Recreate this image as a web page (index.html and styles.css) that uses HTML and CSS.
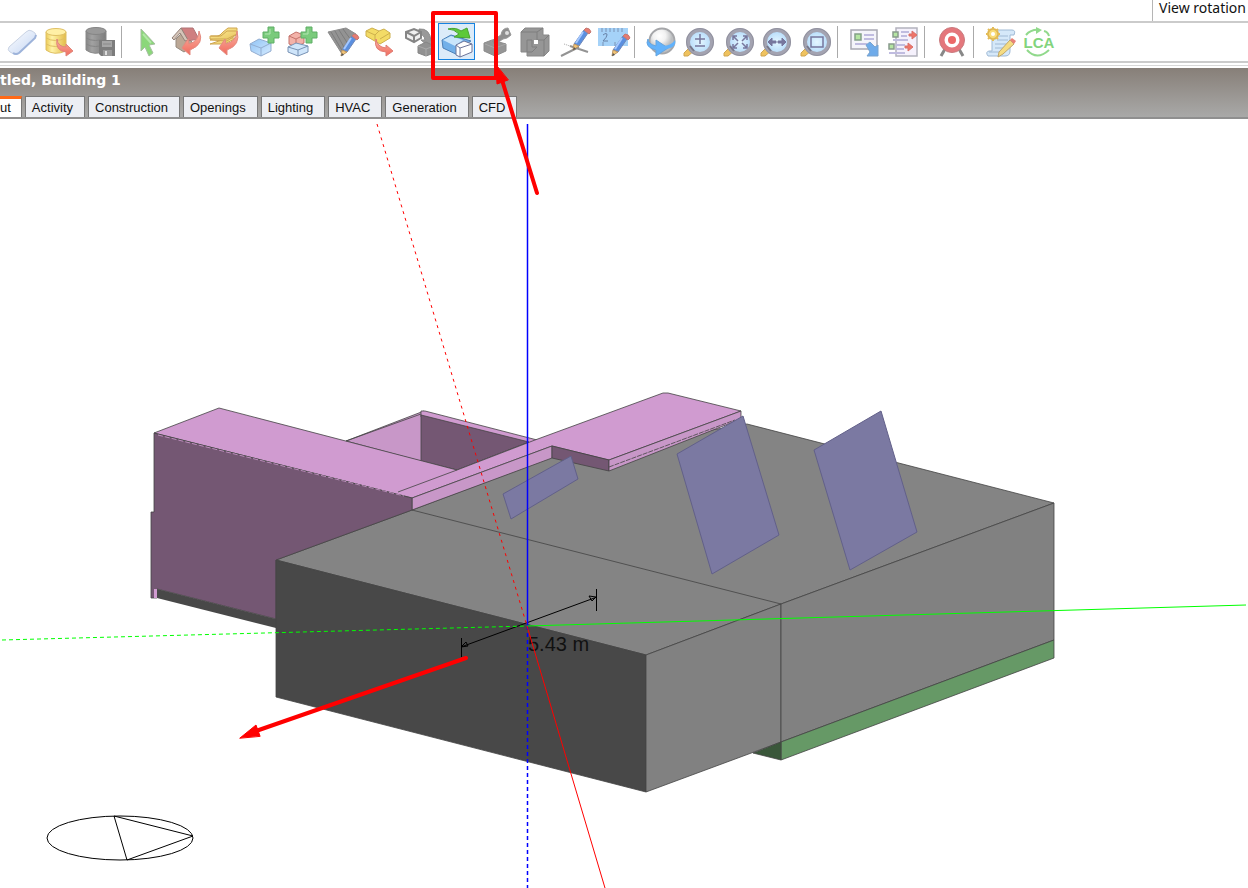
FILE: index.html
```html
<!DOCTYPE html>
<html lang="en">
<head>
<meta charset="utf-8">
<title>Untitled, Building 1</title>
<link rel="stylesheet" href="styles.css">
</head>
<body>
<svg class="defs" aria-hidden="true">
  <defs>
    <linearGradient id="gold" x1="0" y1="0" x2="1" y2="1"><stop offset="0" stop-color="#fff0a0"/><stop offset="1" stop-color="#e8c45c"/></linearGradient>
    <linearGradient id="goldcyl" x1="0" y1="0" x2="1" y2="0"><stop offset="0" stop-color="#eccb55"/><stop offset=".3" stop-color="#fff3a8"/><stop offset="1" stop-color="#e3bb48"/></linearGradient>
    <linearGradient id="redg" x1="0" y1="0" x2="0" y2="1"><stop offset="0" stop-color="#fbb5a5"/><stop offset="1" stop-color="#f0695c"/></linearGradient>
    <linearGradient id="grayg" x1="0" y1="0" x2="1" y2="0"><stop offset="0" stop-color="#858585"/><stop offset=".3" stop-color="#a2a2a2"/><stop offset="1" stop-color="#7c7c7c"/></linearGradient>
    <linearGradient id="eraserg" x1="0" y1="0" x2="1" y2="1"><stop offset="0" stop-color="#ffffff"/><stop offset="1" stop-color="#c3d5f3"/></linearGradient>
    <linearGradient id="blueg" x1="0" y1="0" x2="1" y2="1"><stop offset="0" stop-color="#8fc3f5"/><stop offset="1" stop-color="#d6ebff"/></linearGradient>
    <radialGradient id="lens"><stop offset="0" stop-color="#e4f6ff"/><stop offset="1" stop-color="#b3dafa"/></radialGradient>
    <radialGradient id="ball" cx=".4" cy=".3"><stop offset="0" stop-color="#ffffff"/><stop offset=".5" stop-color="#f2f2f2"/><stop offset="1" stop-color="#bcbec0"/></radialGradient>
    <g id="plus"><path d="M5 0h6v5h5v6h-5v5H5v-5H0V5h5z" fill="#7acb7c" stroke="#5fae66"/><path d="M7 2v5H2" fill="none" stroke="#b2e6b2"/></g>
    <g id="pencil"><path d="M12 1l4 3-9 13-5-2z" fill="#5a8fe0" stroke="#6f88b8"/><path d="M11 3l-7 11" stroke="#a5c8ff" stroke-width="2"/><path d="M12 1l2-2q4 0 5 4l-2 2z" fill="#e77b71" stroke="#c47a74"/><path d="M2 15l5 2-6 4z" fill="#f5c675" stroke="#b89566"/><path d="M1 21l1-3 2 2z" fill="#555"/></g>
    <g id="magnifier"><path d="M6 20l-6 6v3h4l7-6z" fill="#efc25e" stroke="#cfa550"/><circle cx="16" cy="15" r="12" fill="url(#lens)" stroke="#a3a3b1" stroke-width="4"/><circle cx="16" cy="15" r="13.5" fill="none" stroke="#92929f"/><path d="M6 19l4 5" stroke="#77778a" stroke-width="2"/></g>
  </defs>
</svg>

<header class="top-strip">
  <span class="view-label">View rotation</span>
</header>

<nav class="toolbar" aria-label="Model tools">
  <div class="pair">
    <button class="tool" aria-label="Clear"><svg class="icon" viewBox="0 0 30 30"><path d="M1 20L18 5q3-3 6-1l3 2q2 2 0 5L11 26q-3 2-5 1l-4-2q-3-2-1-5z" fill="url(#eraserg)" stroke="#c9d3e4"/><path d="M11 26L27 11l1-3M11 26q-3 2-6 0" fill="none" stroke="#9db3da" stroke-width="2"/></svg></button>
    <button class="tool" aria-label="Load from library"><svg class="icon" viewBox="0 0 30 30"><path d="M1 5v18q8 6 20 1V5z" fill="url(#goldcyl)" stroke="#dfc064"/><ellipse cx="11" cy="5" rx="10" ry="3.5" fill="#fff0a6" stroke="#dfc064"/><path d="M1 11q9 5 20 0M1 17q9 5 20 0" fill="none" stroke="#dfc064"/><path d="M12 12q1 8 9 8v-3l7 7-7 5v-4Q10 24 12 12z" fill="url(#redg)" stroke="#e0867c"/></svg></button>
  </div>
  <button class="tool" aria-label="Save to library"><svg class="icon" viewBox="0 0 30 30"><path d="M1 4v19q8 6 20 1V4z" fill="url(#grayg)" stroke="#8a8a8a"/><ellipse cx="11" cy="4" rx="10" ry="3.5" fill="#999" stroke="#858585"/><path d="M1 11q9 5 20 0M1 17q9 5 20 0" fill="none" stroke="#858585"/><path d="M14 13h16v16H16l-2-2z" fill="#7c7c7c"/><path d="M17 14h10v6H17z" fill="#a6a6a6"/><path d="M18 17h8" stroke="#8a8a8a"/><path d="M18 23h9v6h-9z" fill="#999"/><path d="M20 24h2v4h-2z" fill="#ddd"/></svg></button>
  <span class="separator"></span>
  <div class="pair">
    <button class="tool" aria-label="Select"><svg class="icon" viewBox="0 0 30 30"><path d="M7 2l14 15-6 1 4 8-4 3-4-9-4 4z" fill="#8bd77a" stroke="#a5bfa0"/><path d="M9 7l8 9" stroke="#b2e8a6" stroke-width="2"/></svg></button>
    <span class="spacer"></span>
    <button class="tool" aria-label="Import building"><svg class="icon" viewBox="0 0 30 30"><path d="M4 12l6-6 10 9v4l-8 6-8-5z" fill="#bba795" stroke="#968b80"/><path d="M9 1h12l6 11-12 2z" fill="#cf7f80" stroke="#b07476"/><path d="M0 11L9 1l7 12-3 1-5-8-6 7z" fill="#d4c4b8" stroke="#94827a"/><path d="M27 4q6 13-9 19v5l-8-7 6-9 1 5q10-3 10-13z" fill="url(#redg)" stroke="#e38a80"/></svg></button>
    <button class="tool" aria-label="Import layers"><svg class="icon" viewBox="0 0 30 30"><g fill="url(#gold)" stroke="#cfa650"><path d="M1 17h15l11-6h-8z"/><path d="M1 13l10-5h16l-9 6z"/><path d="M1 9h9l4-4 5-4h9v6l-10 5H1z"/></g><path d="M2 9h10l6-5h9" fill="none" stroke="#cfa650"/><path d="M28 4q4 14-10 19v5l-8-7 6-9 1 5q11-3 11-13z" fill="url(#redg)" stroke="#e38a80"/></svg></button>
  </div>
  <div class="pair">
    <button class="tool" aria-label="Add block"><svg class="icon" viewBox="0 0 30 30"><path d="M0 17l9-5 12 4v8l-10 5-10-5z" fill="url(#blueg)" stroke="#93add0"/><path d="M0 17l11 4 10-5M11 21v8" fill="none" stroke="#93add0"/><use href="#plus" x="13"/></svg></button>
    <button class="tool" aria-label="Add component block"><svg class="icon" viewBox="0 0 30 30"><path d="M2 9l7-4 8 3v8l-8 4-7-3z" fill="#f3b2a9" stroke="#c4736c"/><path d="M2 9l7 3 8-4M9 12v8" fill="none" stroke="#c4736c"/><path d="M1 20l8-4 12 3v6l-10 4-10-4z" fill="#cfe5fa" stroke="#7892b4"/><path d="M1 20l10 3 10-4M11 23v6" fill="none" stroke="#7892b4"/><use href="#plus" x="14"/></svg></button>
  </div>
  <div class="pair snug">
    <button class="tool" aria-label="Draw hatch"><svg class="icon" viewBox="0 0 30 30"><path d="M0 5l18-4 10 6-14 20z" fill="#939393" stroke="#8c8c8c"/><path d="M3 5l12 20M7 4l10 18M11 3l9 14M15 2l8 11" stroke="#7c7c7c"/><use href="#pencil" x="12" y="8"/></svg></button>
    <button class="tool" aria-label="Convert block"><svg class="icon" viewBox="0 0 30 30"><path d="M1 4l6-3 7 3 5-2 6 4v5l-10 6L1 9z" fill="#f3db66" stroke="#cdb04c"/><path d="M1 4l9 4 4-4M10 8v5M15 12l10-6" fill="none" stroke="#cdb04c"/><path d="M11 12q1 8 10 9v-3l7 6-7 5v-4Q8 24 11 12z" fill="url(#redg)" stroke="#e07c74"/></svg></button>
  </div>
  <div class="pair">
    <button class="tool" aria-label="Copy block"><svg class="icon" viewBox="0 0 30 30"><path d="M14 2q11-1 12 12h3l-6 5-7-6h4q-1-6-6-6z" fill="#999" stroke="#8c8c8c"/><path d="M1 5l8-3 7 3v6l-7 4-8-4z" fill="#f0f0f0" stroke="#858585" stroke-width="2"/><path d="M1 5l8 4 7-4M9 9v6" fill="none" stroke="#858585" stroke-width="2"/><path d="M13 19l8-4 8 4v7l-8 3-8-3z" fill="#929292" stroke="#858585"/><path d="M13 19l8 3 8-3m-8 3v7" fill="none" stroke="#aaa"/></svg></button>
    <button class="tool selected" aria-label="Push and pull" aria-pressed="true"><svg class="icon" viewBox="0 0 30 30"><path d="M0 13l9-5 20 6-10 6-3 8L1 21z" fill="#72b0e9" stroke="#4c80b7"/><path d="M1 13l8-4 12 4-8 6z" fill="#c9e5fb"/><path d="M14 18l8-4 8 3v8l-12 5-4-2z" fill="#fff" stroke="#6d7499"/><path d="M14 18l4 3 12-4M18 21v9" fill="none" stroke="#6d7499"/><path d="M6 2q8-2 13 2l6-3 3 10-16-1 5-3Q12 2 6 2z" fill="#5dc93a" stroke="#47a52f"/></svg></button>
  </div>
  <div class="pair">
    <button class="tool" aria-label="Cut block"><svg class="icon" viewBox="0 0 30 30"><path d="M1 16l8-3 14 4v7l-11 5-11-5z" fill="#959595" stroke="#8c8c8c"/><path d="M8 14l10-6q1-7 7-7l3 7q-4 4-8 4l-9 6z" fill="#8e8e8e" stroke="#999"/><circle cx="24" cy="6" r="2" fill="#ddd"/><path d="M2 17l10 4 11-4M12 21v7" fill="none" stroke="#a8a8a8"/></svg></button>
    <button class="tool" aria-label="Hollow block"><svg class="icon" viewBox="0 0 30 30"><path d="M1 5l4-4h18v7h6v16l-5 5H7v-4H1z" fill="#969696" stroke="#888"/><path d="M1 5h16v8M17 5l6-4M7 25V13h5M17 13h7v16M24 13l5-5M7 25h5l5-5h-5v-7" fill="none" stroke="#7e7e7e"/><path d="M14 13h4v4h-4z" fill="#fff"/></svg></button>
  </div>
  <div class="pair">
    <button class="tool" aria-label="Construction line"><svg class="icon" viewBox="0 0 30 30"><path d="M0 29l18-9M9 19l18 6" stroke="#939393" stroke-width="2"/><path d="M3 17l6 2" stroke="#aaa" stroke-dasharray="1 1"/><use href="#pencil" x="11" y="2"/></svg></button>
    <button class="tool" aria-label="Measure"><svg class="icon" viewBox="0 0 30 30"><path d="M0 1h30v18H0z" fill="#a5d2f8"/><path d="M4 1v4m4-4v4m4-4v4m4-4v4m4-4v4m4-4v4M5 19v-4m12 4v-4" stroke="#7a92b5"/><path d="M5 8q4-3 4 0 0 2-4 6h5" fill="none" stroke="#6680a5"/><use href="#pencil" x="13" y="8"/></svg></button>
  </div>
  <span class="separator"></span>
  <div class="pair snug">
    <button class="tool" aria-label="Orbit"><svg class="icon" viewBox="0 0 30 30"><circle cx="15" cy="14" r="12.5" fill="url(#ball)" stroke="#a5a6a9" stroke-width="2"/><path d="M1 12q0 5 8 7v-6l12 8-12 8v-6Q-3 20 1 12z" fill="#62b2fb" stroke="#65a5df"/><path d="M17 19q8-1 11-6 2 8-10 9z" fill="#62b2fb"/></svg></button>
    <button class="tool" aria-label="Zoom"><svg class="icon" viewBox="0 0 30 30"><use href="#magnifier"/><path d="M16 7v10m-5-5h10M11 19h10" stroke="#77779d" stroke-width="1.5"/></svg></button>
  </div>
  <div class="pair">
    <button class="tool" aria-label="Fit view"><svg class="icon" viewBox="0 0 30 30"><use href="#magnifier"/><path d="M9 13V9h4M9 9l5 5M23 13V9h-4m4 0l-5 5M9 17v4h4m-4 0l5-5M23 17v4h-4m4 0l-5-5" fill="none" stroke="#77779d" stroke-width="1.5"/></svg></button>
    <button class="tool" aria-label="Pan"><svg class="icon" viewBox="0 0 30 30"><use href="#magnifier"/><path d="M7 15l4-4v3h4v2h-4v3zM25 15l-4-4v3h-4v2h4v3z" fill="#77779d" stroke="#77779d"/></svg></button>
  </div>
  <button class="tool" aria-label="Zoom window"><svg class="icon" viewBox="0 0 30 30"><use href="#magnifier"/><path d="M10 10h12v10H10z" fill="none" stroke="#77779d" stroke-width="1.5"/></svg></button>
  <span class="separator"></span>
  <div class="pair">
    <button class="tool" aria-label="Export image"><svg class="icon" viewBox="0 0 30 30"><path d="M1 3h26v19H1z" fill="#f4f4fa" stroke="#a8a8b3" stroke-width="1.5"/><path d="M5 7h6v6H5z" fill="#b4e5a2" stroke="#83a088" stroke-width="1.5"/><path d="M14 8h10m-10 4h10M5 17h12" stroke="#c0bce0" stroke-width="2"/><path d="M16 18l4-3 5 5 3-2v11H17l3-4z" fill="#6eabea" stroke="#79a3cf"/></svg></button>
    <span class="spacer"></span>
    <button class="tool" aria-label="Model options"><svg class="icon" viewBox="0 0 30 30"><path d="M8 1h21v28H8z" fill="#f5f1fc" stroke="#b3b2bd" stroke-width="1.5"/><path d="M5 5h5v5H5zM1 17h5v5H1z" fill="#b4e5a2" stroke="#889b8c" stroke-width="1.5"/><path d="M13 5h8m-8 4h6M5 13h15M8 18h9m-9 4h8M1 26h16" stroke="#c0bce0" stroke-width="2"/><path d="M21 7h3V4l5 4-5 4V9h-3zM17 19h3v-3l5 4-5 4v-3h-3z" fill="#ef7468" stroke="#d8716b"/></svg></button>
  </div>
  <span class="separator"></span>
  <button class="tool" aria-label="Target"><svg class="icon" viewBox="0 0 30 30"><path d="M8 22l-4 7m18-7l4 7" stroke="#888" stroke-width="3"/><circle cx="15" cy="13" r="10" fill="#fff" stroke="#e4777c" stroke-width="5"/><circle cx="15" cy="13" r="4" fill="#ec6868"/><circle cx="15" cy="13" r="12.5" fill="none" stroke="#c97a7e"/></svg></button>
  <span class="separator"></span>
  <div class="pair">
    <button class="tool" aria-label="Script"><svg class="icon" viewBox="0 0 30 30"><path d="M6 3h20q4 0 2 5h-4v16q0 5-5 5H2q-3-4 1-5h3z" fill="#d5e8f9" stroke="#a0bad5"/><path d="M11 9h11m-11 4h11M9 17h11M9 21h9M3 25h15" stroke="#a0bad5"/><circle cx="7" cy="7" r="5" fill="#f9dc78" stroke="#dfb550" stroke-width="2"/><path d="M7 0v3m0 8v3M0 7h3m8 0h3M2 2l2 2m6 6l2 2m0-10l-2 2M4 10l-2 2" stroke="#e3bc58" stroke-width="2"/><circle cx="7" cy="7" r="2" fill="#fff"/><path d="M13 25l11-12 4 4-11 10-5 3z" fill="#f5dc82" stroke="#bfa76b"/><path d="M24 13l2-2 4 3-2 3z" fill="#e98279"/></svg></button>
    <button class="tool" aria-label="Life cycle assessment"><svg class="icon" viewBox="0 0 30 30"><path d="M3 8Q8 2 17 3M21 4q4 1 5 5M4 23q10 11 22 0" fill="none" stroke="#91d98c" stroke-width="2"/><path d="M13 0l6 3-6 4z" fill="#91d98c"/><text class="lca" x="16" y="21" text-anchor="middle">LCA</text></svg></button>
  </div>
</nav>

<section class="workspace-head">
  <h1 class="title">tled, Building 1</h1>
  <div class="tabs" role="tablist">
    <button class="tab active" role="tab" aria-selected="true">ut</button>
    <button class="tab" role="tab">Activity</button>
    <button class="tab" role="tab">Construction</button>
    <button class="tab" role="tab">Openings</button>
    <button class="tab" role="tab">Lighting</button>
    <button class="tab" role="tab">HVAC</button>
    <button class="tab" role="tab">Generation</button>
    <button class="tab" role="tab">CFD</button>
  </div>
</section>

<main class="viewport">
  <svg class="scene" viewBox="0 119 1248 769" role="img" aria-label="Building model">
    <g class="edge">
      <path fill="#848484" d="M276 560L412 510 552 457 747 424 1054 503 781 604 646 655z"/>
      <path fill="#c897c8" d="M346 441L424 411 424 462z"/>
      <path fill="#d09bd0" d="M421 411h4L541 441l-12 3-108-27z"/>
      <path fill="#745773" d="M421 415L529 442 457 470 421 461z"/>
      <path fill="#d09bd0" d="M154 433L219 408 457 470 535 440 663 393 668 393 741 411 609 460 552 446 412 498z"/>
      <path fill="none" d="M398 492L457 470M346 441l75-27"/>
      <path fill="#c897c8" d="M412 498L552 446v12L412 510z"/>
      <path fill="#745773" d="M552 446L609 460v11L552 458z"/>
      <path fill="#c897c8" d="M609 460L741 411v8L609 471z"/>
      <path fill="none" stroke-dasharray="5 1" d="M609 467L735 420"/>
      <path fill="#745773" d="M151 512h3V433L412 498V510L276 560V619L157 589v9h-6z"/>
      <path fill="none" stroke="#d09bd0" stroke-dasharray="5 2" d="M158 435L404 496"/>
      <path fill="#d09bd0" stroke="none" d="M154 589h3v9h-3z"/>
      <path fill="#484848" stroke="none" d="M157 589L276 619V628L157 598z"/>
      <path fill="#484848" d="M276 560L646 655V792L276 697z"/>
      <path fill="#818181" d="M646 655L781 604V742L646 792z"/>
      <path fill="#818181" d="M781 604L1054 503V640L781 742z"/>
      <path fill="#669966" d="M781 742L1054 640V658L781 760z"/>
      <path fill="#3a573a" d="M753 753L781 742V760z"/>
      <path fill="none" d="M412 510L781 604"/>
    </g>
    <g class="panel">
      <path d="M503 494L571 456 578 479 511 519z"/>
      <path d="M677 454L743 416 779 535 712 574z"/>
      <path d="M814 450L881 411 917 532 850 570z"/>
    </g>
    <g class="dimension">
      <path d="M461 647L597 597M461.5 638v19M596.5 589v22M461 647l5-5 2 4zM596 597l-7-1 3 5z"/>
      <text x="528" y="651">5.43 m</text>
    </g>
    <g class="axis">
      <path class="vertical" d="M527.5 124V626"/>
      <path class="vertical" stroke-dasharray="4 3" d="M527.5 626V888"/>
      <path stroke="#0f0" stroke-dasharray="4 3" d="M2 640L527 626"/>
      <path stroke="#0f0" d="M527 626L1246 605"/>
      <path stroke="#f00" stroke-dasharray="3 4" d="M377 124L527 626"/>
      <path stroke="#f00" d="M527 626L605 888"/>
    </g>
    <g class="compass">
      <ellipse cx="120" cy="838" rx="73" ry="22"/>
      <path d="M114 816L193 836 127 860z"/>
    </g>
  </svg>
</main>

<svg class="callouts" viewBox="0 0 1248 888" aria-hidden="true">
  <rect x="433" y="13" width="63" height="65"/>
  <path d="M537 193L502 80M466 658L256 731"/>
  <path class="head" d="M496 65l1 19 11-4zM240 738l16-13 4 11z"/>
</svg>
</body>
</html>
```
FILE: styles.css
```css
* {
  box-sizing: border-box;
}

body {
  margin: 0;
  min-height: 100vh;
  position: relative;
  display: flex;
  flex-direction: column;
  overflow: hidden;
  background: #fff;
  color: #111;
  font-family: "Liberation Sans", Arial, sans-serif;
}

button {
  margin: 0;
  padding: 0;
  border: 0;
  background: none;
  color: inherit;
  font: inherit;
}

.defs {
  position: absolute;
  width: 0;
  height: 0;
}

.top-strip {
  display: flex;
  justify-content: flex-end;
  height: 23px;
  border-bottom: 2px solid #cbcbcb;
}

.view-label {
  width: 96px;
  padding-left: 6px;
  border-left: 1px solid #b5b5b5;
  font: 14px/16px "Noto Sans", sans-serif;
  white-space: nowrap;
}

.toolbar {
  display: flex;
  align-items: center;
  height: 40px;
  padding: 0 0 1px 4px;
  border-bottom: 2px solid #cbcbcb;
}

.pair {
  display: flex;
}

.pair + .pair {
  margin-left: 4px;
}

.pair.snug + .pair,
.pair + .tool {
  margin-left: 3px;
}

.spacer {
  width: 1px;
}

.tool {
  display: flex;
  flex: none;
  align-items: center;
  justify-content: center;
  width: 37px;
  height: 37px;
  border: 1px solid transparent;
}

.tool.selected {
  border-color: #1683e0;
  background: #dcebf9;
}

.icon {
  flex: none;
  width: 30px;
  height: 30px;
  overflow: visible;
}

.lca {
  fill: #82d47d;
  font: bold 15px "Liberation Sans", Arial, sans-serif;
}

.separator {
  width: 1px;
  height: 32px;
  margin: 0 8px 0 3px;
  background: #aaa;
}

.workspace-head {
  margin-top: 2px;
  padding-top: 3px;
  border-top: 1px solid #d8d8d8;
  border-bottom: 2px solid #8f8f8f;
  background: linear-gradient(#fff 0 2px, #877f78 2px, #a9a9a8);
  overflow: hidden;
}

.title {
  margin: 0;
  height: 27px;
  color: #fff;
  font: bold 14px/22px "DejaVu Sans", Verdana, sans-serif;
  white-space: nowrap;
}

.tabs {
  display: flex;
  gap: 3px;
}

.tab {
  flex: none;
  height: 21px;
  padding: 2px 11px 0 6px;
  border: 1px solid #777;
  border-width: 1px 1px 0;
  background: #eceef3;
  font-size: 13px;
  line-height: 18px;
}

.tab.active {
  padding: 0 10px 0 0;
  border-top: 3px solid #ff6a18;
  border-left: 0;
  background: #fff;
}

.viewport {
  flex: 1;
}

.scene {
  display: block;
  width: 100%;
}

.edge {
  stroke: #444;
  stroke-opacity: 0.8;
}

.panel {
  fill: #7b79a2;
  stroke: #626089;
}

.dimension path {
  fill: none;
  stroke: #000;
}

.dimension text {
  fill: #111;
  font-size: 20px;
}

.vertical {
  stroke: #00f;
  stroke-width: 1.5;
}

.compass {
  fill: none;
  stroke: #000;
}

.callouts {
  position: absolute;
  top: 0;
  left: 0;
  width: 100%;
  fill: none;
  stroke: #f00;
  stroke-width: 4px;
  stroke-linecap: round;
  stroke-linejoin: round;
  pointer-events: none;
}

.head {
  fill: #f00;
  stroke-width: 1px;
}
```
